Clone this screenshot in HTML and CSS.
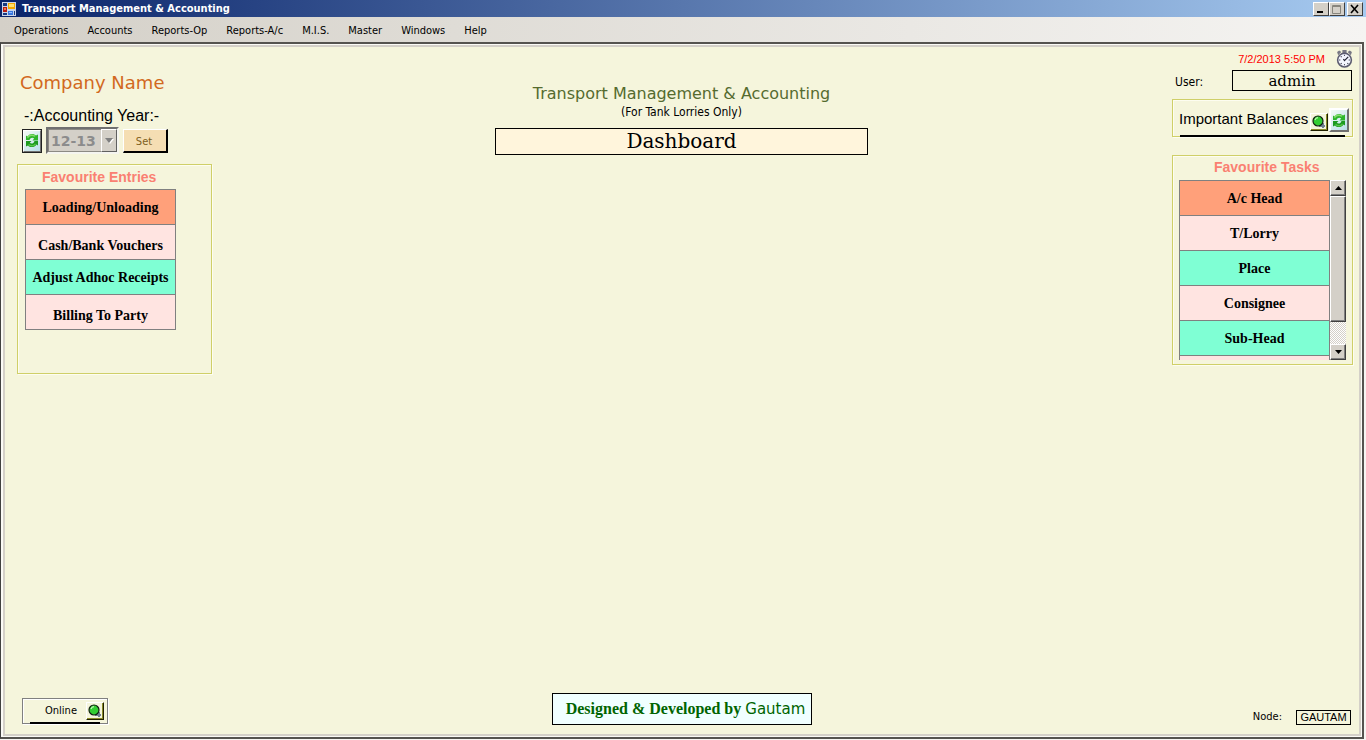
FILE: index.html
```html
<!DOCTYPE html>
<html lang="en">
<head>
<meta charset="utf-8">
<title>Transport Management &amp; Accounting</title>
<link rel="stylesheet" href="styles.css">
</head>
<body>
<svg class="defs" aria-hidden="true">
  <symbol id="refresh" viewBox="0 0 16 16">
    <path d="M2 7.500V3l1.500 1C5.500.800 10 .800 12 3l2-1v6H8.500l1.700-2C8.500 4.600 6.500 5 5.500 7.500z" fill="#2db52b"/>
    <path d="M3 4.500C5 1.500 9 1.500 11.500 3.500l-1 .8C8 3 5.500 3.500 4 6z" fill="#86dc6c"/>
    <path d="M14 8.500V13l-1.500-1C10.500 15.200 6 15.200 4 13l-2 1V8.500h5.500L5.800 10.300c1.700 1.400 3.700 1 4.700-1.800z" fill="#1c9a20"/>
    <path d="M4 12.500c2.500 2 6 2 8-.5l-1-1c-1.500 2-4 2-6 .5z" fill="#58c848"/>
  </symbol>
  <symbol id="lamp" viewBox="0 0 14 14">
    <path d="M10 8h2v2h1v2h-1v1h-2v-1H7v-2z" fill="#708090"/>
    <circle cx="6" cy="6" r="5" fill="#32cd32" stroke="#102010" stroke-width="1.200"/>
    <path d="M3 5q.5-2 3-2.300" fill="none" stroke="#b8f8b0" stroke-width="1.200"/>
  </symbol>
</svg>

<header class="titlebar">
  <svg class="app-icon" viewBox="0 0 14 14" aria-hidden="true">
    <path d="M0 0h14v14H0z" fill="#c8d4ea"/>
    <path d="M1 1h4v3H1zM1 11h4v2H1zM12 9h1v4h-1z" fill="#183880"/>
    <path d="M6 1h7v6H6z" fill="#f5a800"/><path d="M7 2h5v3H7z" fill="#ffe070"/>
    <path d="M1 5h4v5H1z" fill="#b81c10"/><path d="M2 6h2v2H2z" fill="#f07850"/>
    <path d="M6 9h5v4H6z" fill="#3878e0"/><path d="M7 10h3v1H7z" fill="#90b8ff"/>
  </svg>
  <span class="titlebar-text">Transport Management &amp; Accounting</span>
  <div class="window-buttons">
    <button class="win-btn" aria-label="Minimize"><svg viewBox="0 0 12 10"><path d="M2 7h6v2H2z" fill="#000"/></svg></button>
    <button class="win-btn" aria-label="Maximize"><svg viewBox="0 0 12 10"><path d="M1.500 1.500h8v8h-8zM1 2.500h9" fill="none" stroke="#87857d"/></svg></button>
    <button class="win-btn close" aria-label="Close"><svg viewBox="0 0 12 10"><path d="M2 1l7 8M9 1L2 9" stroke="#000" stroke-width="1.600"/></svg></button>
  </div>
</header>

<nav class="menubar">
  <button>Operations</button>
  <button>Accounts</button>
  <button>Reports-Op</button>
  <button>Reports-A/c</button>
  <button>M.I.S.</button>
  <button>Master</button>
  <button>Windows</button>
  <button>Help</button>
</nav>

<main class="client">
  <div class="columns">
    <section class="left">
      <h2 class="company">Company Name</h2>
      <label class="year-label" for="year">-:Accounting Year:-</label>
      <div class="year-row">
        <button class="refresh dark" aria-label="Refresh years"><svg><use href="#refresh"/></svg></button>
        <span class="combo">
          <select id="year" disabled><option>12-13</option></select>
          <span class="combo-arrow"><svg viewBox="0 0 9 6"><path d="M1 1h8L5 6z" fill="#fff"/><path d="M0 0h8L4 5z" fill="#808080"/></svg></span>
        </span>
        <button class="set">Set</button>
      </div>
      <div class="group entries">
        <h3 class="group-title">Favourite Entries</h3>
        <div class="list">
          <button class="item coral">Loading/Unloading</button>
          <button class="item rose low">Cash/Bank Vouchers</button>
          <button class="item aqua">Adjust Adhoc Receipts</button>
          <button class="item rose low">Billing To Party</button>
        </div>
      </div>
    </section>

    <section class="middle">
      <h1 class="app-title">Transport Management &amp; Accounting</h1>
      <p class="subtitle">(For Tank Lorries Only)</p>
      <div class="dashboard">Dashboard</div>
    </section>

    <section class="right">
      <div class="clock-row">
        <time>7/2/2013 5:50 PM</time>
        <svg class="clock" viewBox="0 0 16 17" aria-hidden="true">
          <path d="M6 0h4v3H6zM1 2l2-1.500L5 2 2 5zM15 2l-2-1.500L11 2l3 3z" fill="#777783"/>
          <circle cx="8" cy="9.500" r="6.500" fill="#f4f6ff" stroke="#5c5c70" stroke-width="1.500"/>
          <path d="M8 4.500v1M8 13.500v1M3 9.500h1M12 9.500h1M4.500 6l.7.7M11.500 13l-.7-.7M4.500 13l.7-.7" stroke="#223"/>
          <path d="M7 8.500l1 1.500 3.500-3.500" fill="none" stroke="#223" stroke-width="1.200"/>
        </svg>
      </div>
      <div class="user-row">
        <label for="user">User:</label>
        <input id="user" class="user" value="admin">
      </div>
      <div class="group balances">
        <span class="balances-text">Important Balances</span>
        <button class="lamp" aria-label="Show balances"><svg><use href="#lamp"/></svg></button>
        <button class="refresh" aria-label="Refresh balances"><svg><use href="#refresh"/></svg></button>
      </div>
      <div class="group tasks">
        <h3 class="group-title">Favourite Tasks</h3>
        <div class="task-box">
          <div class="list">
            <button class="item coral">A/c Head</button>
            <button class="item rose">T/Lorry</button>
            <button class="item aqua">Place</button>
            <button class="item rose">Consignee</button>
            <button class="item aqua">Sub-Head</button>
            <button class="item rose" aria-label="More"></button>
          </div>
          <div class="scrollbar">
            <button class="scroll-btn" aria-label="Scroll up"><svg viewBox="0 0 7 4"><path d="M0 4h7L3.500 0z"/></svg></button>
            <div class="thumb"></div>
            <div class="track"></div>
            <button class="scroll-btn" aria-label="Scroll down"><svg viewBox="0 0 7 4"><path d="M0 0h7L3.500 4z"/></svg></button>
          </div>
        </div>
      </div>
    </section>
  </div>

  <footer class="footer">
    <div class="online"><span>Online</span><button class="lamp" aria-label="Connection status"><svg><use href="#lamp"/></svg></button></div>
    <div class="credit"><b>Designed &amp; Developed by</b><span>Gautam</span></div>
    <div class="node"><label for="node">Node:</label><input id="node" value="GAUTAM"></div>
  </footer>
</main>
</body>
</html>
```
FILE: styles.css
```css
* { box-sizing: border-box; }

body {
  margin: 0;
  min-height: 100vh;
  display: flex;
  flex-direction: column;
  background: #f6f5f2;
  color: #000;
  font: 11px/14px "DejaVu Sans Condensed", "DejaVu Sans", sans-serif;
}

button, input, select { font: inherit; color: inherit; border-radius: 0; margin: 0; padding: 0; }
h1, h2, h3, p { margin: 0; font-weight: normal; }
svg { display: block; }
.defs { position: absolute; width: 0; height: 0; }

/* Window frame */
.titlebar {
  display: flex;
  align-items: center;
  height: 17px;
  padding: 0 3px 0 2px;
  background: linear-gradient(90deg, #0a246a, #a6caf0);
  color: #fff;
}
.app-icon { width: 14px; height: 14px; margin-right: 6px; }
.titlebar-text { flex: 1; font-weight: bold; }
.window-buttons { display: flex; }
.win-btn {
  width: 16px;
  height: 14px;
  background: #d4d0c8;
  border: 1px solid;
  border-color: #fff #404040 #404040 #fff;
}
.win-btn svg { width: 12px; height: 10px; margin: auto; }
.close { margin-left: 2px; }

.menubar {
  display: flex;
  gap: 19px;
  height: 25px;
  padding: 2px 14px 0;
  background: linear-gradient(90deg, #d4d0c8, #f5f4f2);
}
.menubar button { background: none; border: 0; }

.client {
  flex: 1;
  display: flex;
  flex-direction: column;
  margin: 0 2px 1px 0;
  background: #f5f5dc;
  border: 2px solid;
  border-color: #55534f #55534f #55534f #404040;
  border-left-width: 1px;
  outline: 2px solid #d4d0c8;
  outline-offset: -5px;
  box-shadow: inset 0 0 0 2px #fbfaf6;
  padding: 4px;
}

.columns, .footer { display: grid; grid-template-columns: 1fr auto 1fr; }
.columns { flex: 1; align-items: start; }

/* Left column */
.left { padding: 24px 0 0 12px; }
.company { margin-left: 3px; color: #d2691e; font: 18px/22px "DejaVu Sans", sans-serif; }
.year-label { display: block; margin: 12px 0 1px 7px; font: 16px/20px "Liberation Sans", Arial, sans-serif; }
.year-row { display: flex; align-items: center; gap: 4px; margin-left: 5px; }

.refresh {
  width: 20px;
  height: 24px;
  background: linear-gradient(135deg, #f4fbf4, #b9ddea);
  border: 2px solid;
  border-color: #fff #707070 #707070 #fff;
}
.refresh.dark { outline: 1px solid #222; outline-offset: -1px; }
.refresh svg { width: 16px; height: 17px; }

.combo {
  display: grid;
  width: 73px;
  height: 27px;
  background: #d4d0c8;
  border: 2px solid;
  border-color: #707070 #f5f5f0 #f5f5f0 #707070;
}
.combo select {
  grid-area: 1 / 1;
  appearance: none;
  padding-left: 2px;
  border: 1px solid #8c8a84;
  background: none;
  color: #8c8c8c;
  opacity: 1;
  font: bold 14px/20px "DejaVu Sans", sans-serif;
}
.combo-arrow {
  grid-area: 1 / 1;
  justify-self: end;
  display: grid;
  place-items: center;
  width: 16px;
  border: 1px solid;
  border-color: #fff #606060 #606060 #fff;
}
.combo-arrow svg { width: 9px; height: 6px; }

.set {
  width: 45px;
  height: 24px;
  padding: 3px 2px 0 0;
  background: #f5deb3;
  color: #806020;
  border: 1px solid;
  border-color: #fff #000 #000 #fff;
  border-right-width: 2px;
  border-bottom-width: 2px;
}

.group { border: 1px solid #cfcf68; box-shadow: inset 1px 1px #fdfdf0, 1px 1px #fdfdf0; }
.entries { width: 195px; height: 210px; margin-top: 10px; padding: 3px 7px; }
.group-title { color: #fa8072; font: bold 14px/18px "Liberation Sans", Arial, sans-serif; }
.entries .group-title { margin-left: 17px; margin-bottom: 3px; }

.list { display: flex; flex-direction: column; width: 151px; border: 1px solid #808080; border-bottom: 0; }
.item {
  flex: none;
  height: 35px;
  padding-top: 2px;
  border: 0;
  border-bottom: 1px solid #808080;
  font: bold 14px/16px "Liberation Serif", "Times New Roman", serif;
}
.item.low { padding-top: 8px; }
.coral { background: #ffa07a; }
.rose { background: #ffe4e1; }
.aqua { background: #7fffd4; }

/* Middle column */
.middle { width: 373px; padding-top: 35px; text-align: center; }
.app-title { color: #556b2f; font: 16px/22px "DejaVu Sans", sans-serif; white-space: nowrap; }
.subtitle { margin-bottom: 8px; font-size: 12px; line-height: 15px; }
.dashboard { height: 27px; border: 1px solid #000; background: #fff5dc; font: 20px/25px "DejaVu Serif", serif; }

/* Right column */
.right { justify-self: end; width: 181px; margin-right: 5px; padding-top: 2px; }
.clock-row { display: flex; justify-content: flex-end; align-items: center; gap: 11px; height: 18px; }
.clock-row time { color: #f00; font: 11px/16px "Liberation Sans", Arial, sans-serif; }
.clock { width: 17px; height: 18px; }
.user-row { display: flex; justify-content: space-between; align-items: center; margin: 2px 1px 8px 3px; }
.user-row label { padding-top: 2px; font-size: 12px; }
.user {
  width: 120px;
  height: 21px;
  border: 1px solid #000;
  background: #f5f5dc;
  text-align: center;
  font: 15px/18px "DejaVu Serif", serif;
}
.balances { position: relative; display: flex; justify-content: space-between; height: 38px; padding: 8px 3px 0 6px; }
.balances::after, .online::after {
  content: "";
  position: absolute;
  left: 7px;
  right: 7px;
  bottom: -1px;
  height: 2px;
  background: #000;
}
.balances-text { font: 15px/22px "Liberation Sans", Arial, sans-serif; }
.lamp {
  width: 18px;
  height: 18px;
  background: #f5f5dc;
  border: 1px solid;
  border-color: #fff #202000 #202000 #fff;
  box-shadow: inset -1px -1px #8a8a28;
}
.lamp svg { width: 14px; height: 14px; margin: auto; }
.balances .lamp { margin-top: 5px; }

.tasks { height: 210px; margin-top: 18px; padding: 2px 6px; }
.tasks .group-title { margin-left: 35px; margin-bottom: 4px; }
.task-box { display: flex; height: 180px; }
.tasks .list { overflow: hidden; }
.scrollbar { display: flex; flex-direction: column; width: 16px; }
.scroll-btn, .thumb {
  background: #d4d0c8;
  border: 1px solid;
  border-color: #fff #404040 #404040 #fff;
  box-shadow: inset -1px -1px #808080;
}
.scroll-btn { display: grid; place-items: center; height: 16px; }
.scroll-btn svg { width: 7px; height: 4px; }
.thumb { height: 126px; }
.track { flex: 1; background: repeating-conic-gradient(#fff 0 25%, #d4d0c8 0 50%) 0 0 / 2px 2px; }

/* Footer */
.footer { align-items: center; padding: 0 7px 8px; }
.online {
  position: relative;
  display: flex;
  align-items: center;
  justify-content: flex-end;
  gap: 9px;
  width: 86px;
  height: 26px;
  margin: 4px 0 0 10px;
  padding-right: 3px;
  border: 1px solid #808080;
  box-shadow: inset 1px 1px #fff, 1px 1px #fff;
}
.credit {
  display: flex;
  align-items: center;
  justify-content: center;
  gap: 4px;
  width: 260px;
  height: 32px;
  padding-left: 8px;
  border: 1px solid #000;
  background: #f0ffff;
  color: #006400;
  white-space: nowrap;
}
.credit b { font: bold 16px/20px "Liberation Serif", "Times New Roman", serif; }
.credit span { font: 15px/20px "DejaVu Sans", sans-serif; }
.node { display: flex; align-items: center; justify-content: flex-end; gap: 14px; padding-top: 16px; }
.node input {
  width: 55px;
  height: 15px;
  border: 1px solid #000;
  background: #f5f5dc;
  text-align: center;
  font: 11px/13px "Liberation Sans", Arial, sans-serif;
}
```
